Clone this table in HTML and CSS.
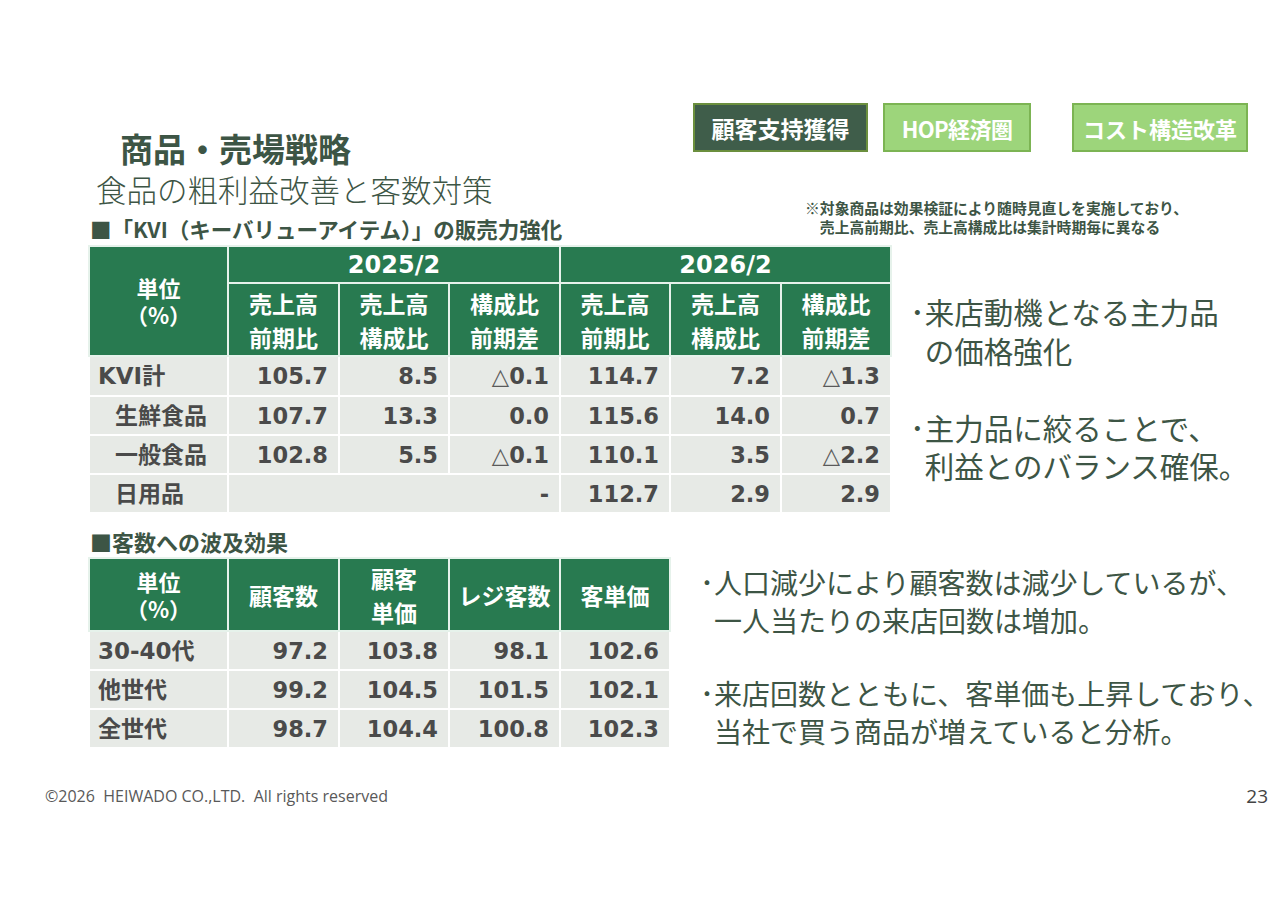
FILE: index.html
```html
<!DOCTYPE html>
<html lang="ja">
<head>
<meta charset="utf-8">
<title>商品・売場戦略</title>
<link rel="stylesheet" href="styles.css">
</head>
<body>
<div class="slide">
  <header class="head">
    <div class="titles">
      <h1 class="title">商品・売場戦略</h1>
      <p class="subtitle">食品の粗利益改善と客数対策</p>
      <h2 class="sec">■「KVI（キーバリューアイテム）」の販売力強化</h2>
    </div>
    <div class="head-right">
      <nav class="tabs">
        <span class="tab tab-dark">顧客支持獲得</span>
        <span class="tab tab-light tab-hop">HOP経済圏</span>
        <span class="tab tab-light tab-cost">コスト構造改革</span>
      </nav>
      <p class="note">※対象商品は効果検証により随時見直しを実施しており、<br>　売上高前期比、売上高構成比は集計時期毎に異なる</p>
    </div>
  </header>

  <section class="row row1">
    <table class="tbl t1">
      <colgroup>
        <col class="c-lbl"><col class="c-a"><col class="c-b"><col class="c-a"><col class="c-b"><col class="c-a"><col class="c-b">
      </colgroup>
      <thead>
        <tr class="hr1">
          <th rowspan="2" class="h-unit">単位<br>（%）</th>
          <th colspan="3" class="h-year">2025/2</th>
          <th colspan="3" class="h-year">2026/2</th>
        </tr>
        <tr class="hr2">
          <th>売上高<br>前期比</th><th>売上高<br>構成比</th><th>構成比<br>前期差</th>
          <th>売上高<br>前期比</th><th>売上高<br>構成比</th><th>構成比<br>前期差</th>
        </tr>
      </thead>
      <tbody>
        <tr class="br first"><th class="lbl">KVI計</th><td>105.7</td><td>8.5</td><td><span class="tri">△</span>0.1</td><td>114.7</td><td>7.2</td><td><span class="tri">△</span>1.3</td></tr>
        <tr class="br"><th class="lbl sub">生鮮食品</th><td>107.7</td><td>13.3</td><td>0.0</td><td>115.6</td><td>14.0</td><td>0.7</td></tr>
        <tr class="br"><th class="lbl sub">一般食品</th><td>102.8</td><td>5.5</td><td><span class="tri">△</span>0.1</td><td>110.1</td><td>3.5</td><td><span class="tri">△</span>2.2</td></tr>
        <tr class="br"><th class="lbl sub">日用品</th><td colspan="3">-</td><td>112.7</td><td>2.9</td><td>2.9</td></tr>
      </tbody>
    </table>
    <div class="points p1">
      <p class="pt"><span class="dot">･</span><span>来店動機となる主力品<br>の価格強化</span></p>
      <p class="pt"><span class="dot">･</span><span>主力品に絞ることで、<br>利益とのバランス確保。</span></p>
    </div>
  </section>

  <h2 class="sec sec2">■客数への波及効果</h2>

  <section class="row row2">
    <table class="tbl t2">
      <colgroup>
        <col class="c-lbl"><col class="c-a"><col class="c-b"><col class="c-a"><col class="c-b">
      </colgroup>
      <thead>
        <tr class="hr2">
          <th class="h-unit">単位<br>（%）</th>
          <th>顧客数</th>
          <th>顧客<br>単価</th>
          <th>レジ客数</th>
          <th>客単価</th>
        </tr>
      </thead>
      <tbody>
        <tr class="br first"><th class="lbl">30-40代</th><td>97.2</td><td>103.8</td><td>98.1</td><td>102.6</td></tr>
        <tr class="br"><th class="lbl">他世代</th><td>99.2</td><td>104.5</td><td>101.5</td><td>102.1</td></tr>
        <tr class="br"><th class="lbl">全世代</th><td>98.7</td><td>104.4</td><td>100.8</td><td>102.3</td></tr>
      </tbody>
    </table>
    <div class="points p2">
      <p class="pt"><span class="dot">･</span><span>人口減少により顧客数は減少しているが、<br>一人当たりの来店回数は増加。</span></p>
      <p class="pt"><span class="dot">･</span><span>来店回数とともに、客単価も上昇しており、<br>当社で買う商品が増えていると分析。</span></p>
    </div>
  </section>

  <footer class="foot">
    <span class="copy">©2026  HEIWADO CO.,LTD.  All rights reserved</span>
    <span class="page">23</span>
  </footer>
</div>
</body>
</html>
```

FILE: styles.css
```css
* {
  box-sizing: border-box;
  margin: 0;
  padding: 0;
}

html, body {
  background: #ffffff;
}

body {
  font-family: "Noto Sans CJK JP", "Noto Sans", sans-serif;
  color: #3d5545;
}

.slide {
  width: 1280px;
  height: 905px;
  padding-top: 103px;
  overflow: hidden;
}

/* ---------- header ---------- */
.head {
  display: flex;
  align-items: flex-start;
}

.titles {
  flex: 1;
  padding-left: 90px;
}

.title {
  font-size: 33px;
  font-weight: 700;
  line-height: 38px;
  margin-top: 26px;
  padding-left: 30px;
}

.subtitle {
  font-size: 30.5px;
  font-weight: 300;
  line-height: 38px;
  margin-top: 3px;
  padding-left: 6px;
}

.sec {
  font-size: 21.5px;
  font-weight: 700;
  line-height: 28px;
  margin-top: 7px;
}

.head-right {
  display: flex;
  flex-direction: column;
  align-items: flex-end;
  padding-right: 32px;
}

.tabs {
  display: flex;
}

.tab {
  height: 49px;
  display: flex;
  align-items: center;
  justify-content: center;
  color: #ffffff;
  font-size: 22px;
  font-weight: 700;
  border: 2px solid;
}

.tab-dark {
  width: 175px;
  font-size: 23px;
  background: #3f5d4a;
  border-color: #6b8f3e;
}

.tab-light {
  background: #9dd57b;
  border-color: #7cb453;
}

.tab-hop {
  width: 148px;
  margin-left: 15px;
  letter-spacing: -0.6px;
}

.tab-cost {
  width: 176px;
  margin-left: 41px;
}

.note {
  margin-top: 47px;
  margin-right: 60px;
  font-size: 14.8px;
  font-weight: 700;
  line-height: 18.5px;
}

/* ---------- rows ---------- */
.row {
  display: flex;
  align-items: flex-start;
  padding-left: 88px;
}

.row1 {
  margin-top: 2px;
}

.sec2 {
  margin-top: 13px;
  padding-left: 90px;
  font-size: 22px;
}

.row2 {
  margin-top: 2px;
}

/* ---------- tables ---------- */
.tbl {
  border-collapse: collapse;
  table-layout: fixed;
  font-family: "DejaVu Sans", "Noto Sans CJK JP", sans-serif;
}

.t1 { width: 802px; }
.t2 { width: 581px; }

.c-lbl { width: 139px; }
.c-a { width: 111px; }
.c-b { width: 110px; }

.tbl th,
.tbl td {
  border: 2px solid #ffffff;
  vertical-align: middle;
}

.tbl thead th {
  background: #287a50;
  color: #ffffff;
  font-family: "Noto Sans CJK JP", sans-serif;
  font-size: 23px;
  font-weight: 700;
  line-height: 34px;
  text-align: center;
  border-color: #e6f2eb;
}

.tbl thead th.h-unit {
  font-size: 22px;
  line-height: 27px;
}

.tbl thead th.h-year {
  font-family: "DejaVu Sans", sans-serif;
  font-size: 24px;
  line-height: 30px;
}

.hr1 { height: 37px; }
.hr2 { height: 73px; }
.br { height: 39px; }
.t1 .br.first { height: 40px; }

.tbl tbody tr.first th,
.tbl tbody tr.first td {
  border-top-color: #d3ede1;
}

.tbl tbody th,
.tbl tbody td {
  background: #e7eae6;
  color: #4a4a4a;
  font-size: 22.5px;
  font-weight: 700;
  line-height: 28px;
  text-align: right;
  padding: 0 10px;
}

.tbl tbody th.lbl {
  text-align: left;
  padding-left: 8px;
  font-size: 23px;
}

.tbl tbody th.lbl.sub {
  padding-left: 25px;
}

.tri {
  font-weight: 400;
  color: #5a5a5a;
}

/* ---------- bullet points ---------- */
.points {
  font-weight: 400;
  color: #3d5545;
}

.pt {
  display: flex;
}

.dot {
  flex: none;
}

.p1 {
  margin-left: 18px;
  padding-top: 47px;
  font-size: 29.5px;
  line-height: 38.5px;
}

.p1 .pt + .pt {
  margin-top: 38.5px;
}

.p2 {
  margin-left: 29px;
  padding-top: 7px;
  font-size: 28px;
  line-height: 37.5px;
}

.p2 .pt + .pt {
  margin-top: 36px;
}

/* ---------- footer ---------- */
.foot {
  display: flex;
  justify-content: space-between;
  align-items: center;
  margin-top: 36px;
  padding: 0 12px 0 45px;
  line-height: 20px;
}

.copy {
  font-family: "Open Sans", sans-serif;
  font-size: 16px;
  color: #595959;
  white-space: pre;
}

.page {
  font-family: "Open Sans", sans-serif;
  font-size: 19px;
  color: #444444;
}
```
